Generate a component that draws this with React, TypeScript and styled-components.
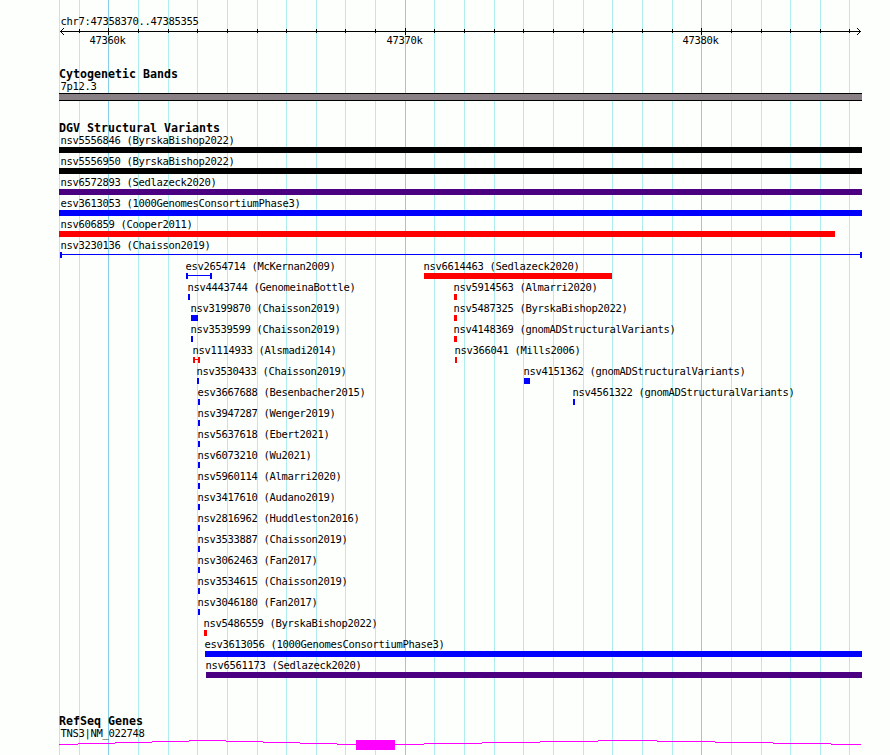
import styled, { createGlobalStyle } from 'styled-components'

/* ------------------------------------------------------------------
 * GENOME BROWSER
 * ------------------------------------------------------------------
 * A ruler, then one track per data source. Every track shares the
 * same vertical grid that sits behind all of them.
 * All x values are pixels from the left side of the panel.
 * ------------------------------------------------------------------ */

const GRID = [
  59, 79, 108, 138, 168, 197, 227, 257, 286, 316, 345, 375, 405, 434,
  464, 494, 523, 553, 583, 612, 642, 672, 701, 731, 761, 790, 820, 849,
]
const MAJOR = [108, 405, 701]
const START = 59
const END = 862

const BLUE = '#0000ff'
const RED = '#ff0000'
const INDIGO = '#4b0082'
const BLACK = '#000000'
const PINK = '#ff00ff'

type Feature = {
  name: string
  from: number
  to: number
  color: string
  span?: boolean // thin line with end caps
  labelAt?: number
}

const small = (name: string, from = 198, to = 200): Feature => ({ name, from, to, color: BLUE })

// features in the same array share one row
const rows: Feature[][] = [
  [{ name: 'nsv5556846 (ByrskaBishop2022)', from: START, to: END, color: BLACK, labelAt: 60 }],
  [{ name: 'nsv5556950 (ByrskaBishop2022)', from: START, to: END, color: BLACK, labelAt: 60 }],
  [{ name: 'nsv6572893 (Sedlazeck2020)', from: START, to: END, color: INDIGO, labelAt: 60 }],
  [{ name: 'esv3613053 (1000GenomesConsortiumPhase3)', from: START, to: END, color: BLUE, labelAt: 60 }],
  [{ name: 'nsv606859 (Cooper2011)', from: START, to: 835, color: RED, labelAt: 60 }],
  [{ name: 'nsv3230136 (Chaisson2019)', from: 60, to: END, color: BLUE, span: true, labelAt: 60 }],
  [
    { name: 'esv2654714 (McKernan2009)', from: 186, to: 212, color: BLUE, span: true },
    { name: 'nsv6614463 (Sedlazeck2020)', from: 424, to: 612, color: RED },
  ],
  [
    small('nsv4443744 (GenomeinaBottle)', 188, 190),
    { name: 'nsv5914563 (Almarri2020)', from: 454, to: 457, color: RED },
  ],
  [
    small('nsv3199870 (Chaisson2019)', 191, 198),
    { name: 'nsv5487325 (ByrskaBishop2022)', from: 454, to: 457, color: RED },
  ],
  [
    small('nsv3539599 (Chaisson2019)', 191, 193),
    { name: 'nsv4148369 (gnomADStructuralVariants)', from: 454, to: 457, color: RED },
  ],
  [
    { name: 'nsv1114933 (Alsmadi2014)', from: 193, to: 200, color: RED, span: true },
    { name: 'nsv366041 (Mills2006)', from: 455, to: 457, color: RED },
  ],
  [
    small('nsv3530433 (Chaisson2019)', 197, 199),
    small('nsv4151362 (gnomADStructuralVariants)', 524, 530),
  ],
  [
    small('esv3667688 (Besenbacher2015)'),
    small('nsv4561322 (gnomADStructuralVariants)', 573, 575),
  ],
  [small('nsv3947287 (Wenger2019)')],
  [small('nsv5637618 (Ebert2021)')],
  [small('nsv6073210 (Wu2021)')],
  [small('nsv5960114 (Almarri2020)')],
  [small('nsv3417610 (Audano2019)')],
  [small('nsv2816962 (Huddleston2016)')],
  [small('nsv3533887 (Chaisson2019)')],
  [small('nsv3062463 (Fan2017)')],
  [small('nsv3534615 (Chaisson2019)')],
  [small('nsv3046180 (Fan2017)')],
  [{ name: 'nsv5486559 (ByrskaBishop2022)', from: 204, to: 207, color: RED }],
  [{ name: 'esv3613056 (1000GenomesConsortiumPhase3)', from: 205, to: END, color: BLUE }],
  [{ name: 'nsv6561173 (Sedlazeck2020)', from: 206, to: END, color: INDIGO }],
]

// [x1, x2, y] steps of the two intron arcs
const intron = [
  [59, 78, 4], [78, 115, 3], [115, 152, 2], [152, 189, 1], [189, 226, 0],
  [226, 263, 1], [263, 300, 2], [300, 337, 3], [337, 356, 4],
  [395, 424, 4], [424, 482, 3], [482, 540, 2], [540, 598, 1], [598, 657, 0],
  [657, 715, 1], [715, 773, 2], [773, 831, 3], [831, 861, 4],
]

function Ruler() {
  return (
    <RulerTrack>
      <Label $x={60}>chr7:47358370..47385355</Label>
      <Axis width="890" height="9" shapeRendering="crispEdges">
        <rect x="60" y="4" width="801" height="1" />
        {GRID.slice(1).map((x) =>
          MAJOR.includes(x)
            ? <rect key={x} x={x} y="1" width="1" height="7" />
            : <rect key={x} x={x} y="2" width="1" height="4" />
        )}
        {[1, 2, 3].map((d) => (
          <g key={d}>
            <rect x={60 + d} y={4 - d} width="1" height="1" />
            <rect x={60 + d} y={4 + d} width="1" height="1" />
            <rect x={860 - d} y={4 - d} width="1" height="1" />
            <rect x={860 - d} y={4 + d} width="1" height="1" />
          </g>
        ))}
      </Axis>
      <Stack>
        <Label $x={89}>47360k</Label>
        <Label $x={386}>47370k</Label>
        <Label $x={682}>47380k</Label>
      </Stack>
    </RulerTrack>
  )
}

function Variant({ name, from, to, color, span, labelAt }: Feature) {
  return (
    <Cell>
      <Label $x={labelAt ?? from - 1}>{name}</Label>
      {span
        ? <Span $from={from} $to={to} $color={color} />
        : <Bar $from={from} $to={to} $color={color} />}
    </Cell>
  )
}

function App() {
  return (
    <Panel>
      <GlobalStyle />
      <GridLayer>
        {GRID.map((x) => <GridLine key={x} $x={x} $major={MAJOR.includes(x)} />)}
      </GridLayer>

      <Ruler />

      <Track $height={54}>
        <Heading>Cytogenetic Bands</Heading>
        <Label $x={60}>7p12.3</Label>
        <Band />
      </Track>

      <Track $height={593}>
        <Heading>DGV Structural Variants</Heading>
        {rows.map((row) => (
          <Row key={row[0].name}>
            {row.map((f) => <Variant key={f.name} {...f} />)}
          </Row>
        ))}
      </Track>

      <Track $height={40}>
        <Heading>RefSeq Genes</Heading>
        <Label $x={60}>TNS3|NM_022748</Label>
        <Gene width="890" height="10" fill={PINK} shapeRendering="crispEdges">
          {intron.map(([x1, x2, y]) => (
            <rect key={x1} x={x1} y={y} width={x2 - x1} height="1" />
          ))}
          <rect x="356" y="0" width="39" height="10" />
        </Gene>
      </Track>
    </Panel>
  )
}

export default App

// ------------------ STYLING ------------------

const GlobalStyle = createGlobalStyle`
  body {
    margin: 0;
    background: #fdfffc;
  }
`

const Panel = styled.main`
  position: relative;
  width: 890px;
  height: 755px;
  overflow: hidden;
  background: #fdfffc;
  color: #000;
  font-family: 'DejaVu Sans Mono', monospace;
`

// lies behind every track
const GridLayer = styled.div`
  position: absolute;
  inset: 0;
  display: grid;
`

const GridLine = styled.div<{ $x: number; $major: boolean }>`
  grid-area: 1 / 1;
  width: 1px;
  margin-left: ${(p) => p.$x}px;
  background: ${(p) => (p.$major ? '#87ceeb' : '#afeeee')};
`

const RulerTrack = styled.header`
  position: relative;
  box-sizing: border-box;
  height: 67px;
  padding-top: 15px;
`

const Axis = styled.svg`
  display: block;
  margin-top: -1px;
`

const Stack = styled.div`
  display: grid;
  margin-top: -2px;

  > * {
    grid-area: 1 / 1;
  }
`

const Track = styled.section<{ $height: number }>`
  position: relative;
  height: ${(p) => p.$height}px;
`

const Heading = styled.h2`
  margin: 0 0 0 59px;
  height: 13px;
  font-size: 11.63px;
  line-height: 14px;
  font-weight: 700;
  white-space: pre;
`

const Label = styled.div<{ $x: number }>`
  height: 13px;
  margin-left: ${(p) => p.$x + 0.5}px;
  font-size: 10.5px;
  line-height: 13px;
  letter-spacing: -0.321px;
  white-space: pre;
`

const Band = styled.div`
  box-sizing: border-box;
  width: 803px;
  height: 8px;
  margin-left: 59px;
  background: #888085;
  border: solid #000;
  border-width: 1px 0;
`

const Row = styled.div`
  display: grid;
  height: 21px;
`

const Cell = styled.div`
  grid-area: 1 / 1;
`

const Bar = styled.div<{ $from: number; $to: number; $color: string }>`
  width: ${(p) => p.$to - p.$from}px;
  height: 6px;
  margin-left: ${(p) => p.$from}px;
  background: ${(p) => p.$color};
`

const Span = styled.div<{ $from: number; $to: number; $color: string }>`
  box-sizing: border-box;
  width: ${(p) => p.$to - p.$from}px;
  height: 6px;
  margin-left: ${(p) => p.$from}px;
  border: solid ${(p) => p.$color};
  border-width: 0 2px;
  background: linear-gradient(${(p) => p.$color}, ${(p) => p.$color}) 0 2px / 100% 1px no-repeat;
`

const Gene = styled.svg`
  display: block;
`
